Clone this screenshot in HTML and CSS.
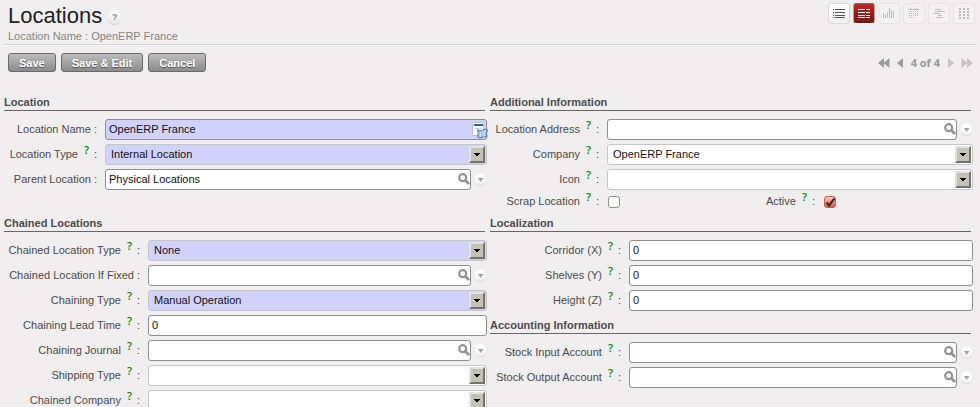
FILE: index.html
```html
<!DOCTYPE html>
<html lang="en">
<head>
<meta charset="utf-8">
<title>Locations</title>
<link rel="stylesheet" href="styles.css">
</head>
<body>
<svg class="sprite" aria-hidden="true">
  <defs>
    <linearGradient id="g-round" x1="0" y1="0" x2="0" y2="1"><stop offset="0" stop-color="#fff"/><stop offset="1" stop-color="#f0f0f0"/></linearGradient>
  </defs>
  <symbol id="search" viewBox="0 0 12 12">
    <circle cx="4.7" cy="4.700" r="3.500" fill="none" stroke="#949494" stroke-width="2.200"/>
    <path d="M7.600 7.600 10.300 10.300" stroke="#949494" stroke-width="2.800" stroke-linecap="round"/>
  </symbol>
  <symbol id="open" viewBox="0 0 13 13">
    <circle cx="6.500" cy="7" r="6" fill="#d6d6d6"/>
    <circle cx="6.500" cy="6.300" r="6" fill="url(#g-round)"/>
    <path d="M4 5h5.400L6.700 9z" fill="#a2a2a2"/>
  </symbol>
  <symbol id="drop" viewBox="0 0 16 17">
    <path d="M0 0h16v17H0z" fill="#c3c2b4"/>
    <path d="M0 17V0h16l-2 2H2v13z" fill="#e4e4df"/>
    <path d="M16 0v17H0l2-2h12V2z" fill="#74736a"/>
    <path d="M5 7h6v1h-1v1H9v1H7V9H6V8H5z" fill="#000"/>
  </symbol>
</svg>

<header class="header">
  <div>
    <h1 class="title">Locations <a class="title-help" href="#" aria-label="Help">?</a></h1>
    <p class="subtitle">Location Name : OpenERP France</p>
  </div>
  <nav class="views" aria-label="Views">
    <button class="view" aria-label="List"><svg viewBox="0 0 12 12"><path d="M0 1h1v1H0zM2 1h10v1H2zM0 4h1v1H0zM2 4h10v1H2zM0 7h1v1H0zM2 7h10v1H2zM0 9h1v1H0zM2 9h10v1H2z" fill="#555"/></svg></button>
    <button class="view view-active" aria-label="Form"><svg viewBox="0 0 12 12"><path d="M0 1h7v1H0zM8 1h4v1H8zM0 4h7v1H0zM8 4h4v1H8zM0 7h7v1H0zM8 7h4v1H8zM0 9h7v1H0zM8 9h4v1H8z" fill="#fff"/></svg></button>
    <button class="view view-off" aria-label="Graph" disabled><svg viewBox="0 0 12 12"><path d="M0 5h1v5H0zM2 6h1v4H2zM4 4h1v6H4zM6 0h1v10H6zM8 2h1v8H8zM10 3h1v7h-1z"/></svg></button>
    <button class="view view-off" aria-label="Calendar" disabled><svg viewBox="0 0 12 12"><path d="M0 1h11v1H0zM2 0h1v1H2zM8 0h1v1H8zM1 3h1v1H1zM3 3h1v1H3zM5 3h1v1H5zM7 3h1v1H7zM9 3h1v1H9zM1 5h1v1H1zM3 5h1v1H3zM5 5h1v1H5zM7 5h1v1H7zM9 5h1v1H9zM1 7h1v1H1zM3 7h1v1H3zM5 7h1v1H5zM7 7h1v1H7zM9 7h1v1H9zM1 9h1v1H1zM3 9h1v1H3zM5 9h1v1H5z"/></svg></button>
    <button class="view view-off" aria-label="Gantt" disabled><svg viewBox="0 0 12 12"><path d="M2 1h6v1H2zM2 3h10v1H2zM0 5h7v1H0zM5 7h4v1H5zM3 9h7v1H3z"/></svg></button>
    <button class="view view-off" aria-label="Kanban" disabled><svg viewBox="0 0 12 12"><path d="M1 0h2v2H1zM5 0h2v2H5zM9 0h2v2H9zM1 3h2v2H1zM5 3h2v2H5zM9 3h2v2H9zM1 6h2v2H1zM5 6h2v2H5zM9 6h2v2H9zM1 9h2v2H1zM5 9h2v2H5zM9 9h2v2H9z"/></svg></button>
  </nav>
</header>

<div class="toolbar">
  <div class="actions">
    <button class="action">Save</button>
    <button class="action">Save &amp; Edit</button>
    <button class="action">Cancel</button>
  </div>
  <div class="pager">
    <a href="#" aria-label="First"><svg width="12" height="10" viewBox="0 0 12 10"><path d="M6 0v10L0 5zM11.500 0v10L5.500 5z" fill="#999c9a"/></svg></a>
    <a href="#" aria-label="Previous"><svg width="7" height="10" viewBox="0 0 7 10"><path d="M6 0v10L0 5z" fill="#999c9a"/></svg></a>
    <span>4 of 4</span>
    <a href="#" aria-label="Next"><svg width="7" height="10" viewBox="0 0 7 10"><path d="M1 0v10l6-5z" fill="#c4c4c4"/></svg></a>
    <a href="#" aria-label="Last"><svg width="12" height="10" viewBox="0 0 12 10"><path d="M.5 0v10l6-5zM6 0v10l6-5z" fill="#c4c4c4"/></svg></a>
  </div>
</div>

<form class="sheet">
  <section class="group group-location">
    <h2>Location</h2>
    <div class="fields">
      <label for="name">Location Name :</label>
      <div class="box"><input id="name" class="text required" value="OpenERP France">
        <svg class="translate" viewBox="0 0 16 17"><rect x=".5" y=".5" width="11" height="13" rx="1" fill="#fafcff" stroke="#b4bfcb"/><path d="M2 3h9" stroke="#2c64a6" stroke-width="2"/><path d="M3 6.500h7" stroke="#ccd3dc"/><path d="M5.500 7.500c2 2 3 1.500 5 .5 1.500-.8 3-1 5-.3l-1 4 .6 3.300c-2-.6-3.600-.3-5 .4-1.600.8-3 .4-4.600-.6l.8-3.500z" fill="#a5caf0" stroke="#4675ae"/><path d="M8.500 10v5M12 9v5.500" stroke="#cfe4f9"/></svg></div>
      <label for="type">Location Type<sup>?</sup>:</label>
      <div class="box"><select id="type" class="required"><option>Internal Location</option></select><svg class="drop"><use href="#drop"/></svg></div>
      <label for="parent">Parent Location :</label>
      <div class="lookup"><div class="box"><input id="parent" class="text" value="Physical Locations"><svg class="search"><use href="#search"/></svg></div><svg class="open"><use href="#open"/></svg></div>
    </div>
  </section>

  <section class="group group-additional">
    <h2>Additional Information</h2>
    <div class="fields">
      <label for="address">Location Address<sup>?</sup>:</label>
      <div class="lookup"><div class="box"><input id="address" class="text"><svg class="search"><use href="#search"/></svg></div><svg class="open"><use href="#open"/></svg></div>
      <label for="company">Company<sup>?</sup>:</label>
      <div class="box"><select id="company"><option>OpenERP France</option></select><svg class="drop"><use href="#drop"/></svg></div>
      <label for="icon">Icon<sup>?</sup>:</label>
      <div class="box"><select id="icon"><option></option></select><svg class="drop"><use href="#drop"/></svg></div>
      <label for="scrap" class="short">Scrap Location<sup>?</sup>:</label>
      <div class="checks">
        <input type="checkbox" id="scrap">
        <label for="active" class="short">Active<sup>?</sup>:</label>
        <span class="tick"><input type="checkbox" id="active" checked><svg viewBox="0 0 12 12"><path d="M2.500 6.500 5 9.500 10.500 2.500" fill="none" stroke="#333" stroke-width="2.200"/></svg></span>
      </div>
    </div>
  </section>

  <section class="group group-wide">
    <h2>Chained Locations</h2>
    <div class="fields">
      <label for="ctype">Chained Location Type<sup>?</sup>:</label>
      <div class="box"><select id="ctype" class="required"><option>None</option></select><svg class="drop"><use href="#drop"/></svg></div>
      <label for="cfixed">Chained Location If Fixed :</label>
      <div class="lookup"><div class="box"><input id="cfixed" class="text"><svg class="search"><use href="#search"/></svg></div><svg class="open"><use href="#open"/></svg></div>
      <label for="chtype">Chaining Type<sup>?</sup>:</label>
      <div class="box"><select id="chtype" class="required"><option>Manual Operation</option></select><svg class="drop"><use href="#drop"/></svg></div>
      <label for="lead">Chaining Lead Time<sup>?</sup>:</label>
      <div class="box"><input id="lead" class="text" value="0"></div>
      <label for="journal">Chaining Journal<sup>?</sup>:</label>
      <div class="lookup"><div class="box"><input id="journal" class="text"><svg class="search"><use href="#search"/></svg></div><svg class="open"><use href="#open"/></svg></div>
      <label for="ship">Shipping Type<sup>?</sup>:</label>
      <div class="box"><select id="ship"><option></option></select><svg class="drop"><use href="#drop"/></svg></div>
      <label for="ccompany">Chained Company<sup>?</sup>:</label>
      <div class="box"><select id="ccompany"><option></option></select><svg class="drop"><use href="#drop"/></svg></div>
    </div>
  </section>

  <div class="stack">
    <section class="group group-stock">
      <h2>Localization</h2>
      <div class="fields">
        <label for="posx">Corridor (X)<sup>?</sup>:</label>
        <div class="box"><input id="posx" class="text" value="0"></div>
        <label for="posy">Shelves (Y)<sup>?</sup>:</label>
        <div class="box"><input id="posy" class="text" value="0"></div>
        <label for="posz">Height (Z)<sup>?</sup>:</label>
        <div class="box"><input id="posz" class="text" value="0"></div>
      </div>
    </section>
    <section class="group group-stock">
      <h2>Accounting Information</h2>
      <div class="fields">
        <label for="accin">Stock Input Account<sup>?</sup>:</label>
        <div class="lookup"><div class="box"><input id="accin" class="text"><svg class="search"><use href="#search"/></svg></div><svg class="open"><use href="#open"/></svg></div>
        <label for="accout">Stock Output Account<sup>?</sup>:</label>
        <div class="lookup"><div class="box"><input id="accout" class="text"><svg class="search"><use href="#search"/></svg></div><svg class="open"><use href="#open"/></svg></div>
      </div>
    </section>
  </div>
</form>
</body>
</html>
```
FILE: styles.css
```css
* { box-sizing: border-box; }

body {
  margin: 0;
  height: 100vh;
  overflow: hidden;
  background: #f0eeee;
  color: #4c4c4c;
  font: 11px/14px "Liberation Sans", Arial, sans-serif;
}

input, select, button { font: inherit; }
svg { display: block; }
.sprite { position: absolute; width: 0; height: 0; }

/* Header */
.header {
  display: flex;
  justify-content: space-between;
  margin: 0 5px 0 3px;
  padding: 3px 0 0 5px;
  border-bottom: 1px solid #d6d6d6;
  box-shadow: 0 1px 0 #fff;
}
.title {
  display: flex;
  align-items: center;
  gap: 6px;
  margin: 0;
  color: #222;
  font-size: 22px;
  font-weight: normal;
  line-height: 26px;
}
.title-help {
  width: 13px;
  height: 13px;
  margin-top: 3px;
  border-radius: 50%;
  background: linear-gradient(#fff, #e6e6e6);
  box-shadow: 0 1px 1px #d0d0d0;
  color: #888;
  font-size: 9px;
  font-weight: bold;
  line-height: 13px;
  text-align: center;
  text-decoration: none;
}
.subtitle { margin: 0; padding-bottom: 1px; color: #868686; }

.views { display: flex; gap: 3px; }
.view {
  display: flex;
  align-items: center;
  justify-content: center;
  width: 22px;
  height: 21px;
  padding: 0;
  border: 1px solid #d8d8d8;
  border-radius: 3px;
  background: linear-gradient(#fff, #f0f0f0);
}
.view svg { width: 12px; height: 12px; fill: #bdbdbd; shape-rendering: crispEdges; }
.view-active {
  border-color: #7d6b6b #b9a0a0 #fff;
  background: linear-gradient(#c0281c, #74150f);
}
.view-off { border-color: #e6e4e4; background: #f3f1f1; }

/* Toolbar */
.toolbar {
  display: flex;
  justify-content: space-between;
  align-items: center;
  padding: 8px 7px 23px 8px;
}
.actions { display: flex; gap: 5px; }
.action {
  height: 19px;
  padding: 0 10px;
  border: 1px solid #6a6a6a;
  border-radius: 3px;
  background: linear-gradient(#bcbcbc, #8c8c8c);
  color: #fff;
  font-weight: bold;
  line-height: 16px;
  text-shadow: 0 1px 1px #555;
}
.pager {
  display: flex;
  align-items: center;
  gap: 7px;
  color: #999;
  font-family: "Open Sans", sans-serif;
  font-weight: bold;
}

/* Form */
.sheet {
  display: grid;
  grid-template-columns: minmax(0, 1fr) minmax(0, 1fr);
  gap: 7px 3px;
  padding: 0 7px 0 4px;
}
.stack { display: grid; gap: 7px; align-content: start; }
.group h2 {
  margin: 0 2px 8px 0;
  padding-bottom: 1px;
  border-bottom: 1px solid #666;
  font-size: 11px;
  line-height: 14px;
}
.fields {
  display: grid;
  grid-template-columns: 93px minmax(0, 1fr);
  gap: 4px 8px;
}
.group-additional .fields { grid-template-columns: 109px minmax(0, 1fr); }
.group-wide .fields { grid-template-columns: 136px minmax(0, 1fr); }
.group-stock .fields { grid-template-columns: 131px minmax(0, 1fr); }

label { line-height: 21px; text-align: right; white-space: nowrap; }
.short { line-height: 15px; }
sup {
  margin: 0 5px 0 6px;
  color: #080;
  font: 600 11px/1px "Open Sans", sans-serif;
  vertical-align: 4px;
}

.box { position: relative; flex: 1; min-width: 0; }
.text, select {
  display: block;
  width: 100%;
  height: 21px;
  margin: 0;
  padding: 0 3px 1px;
  border: 1px solid #8f8f8f;
  border-radius: 3px;
  background: #fff;
  color: #111;
}
select { appearance: none; padding: 0 5px 1px; border-color: #c6c6c6; }
.required { background: #d2d2ff; }

.drop, .search, .translate { position: absolute; pointer-events: none; }
.drop { top: 2px; right: 2px; width: 16px; height: 17px; }
.search { top: 4px; right: 1px; width: 12px; height: 12px; }
.translate { top: 3px; right: -1px; width: 16px; height: 17px; }
.lookup { display: flex; align-items: center; gap: 3px; }
.open { width: 13px; height: 13px; }

.checks {
  display: grid;
  grid-template-columns: 14px 1fr 41%;
  align-items: center;
  column-gap: 8px;
}
.checks input {
  appearance: none;
  display: block;
  width: 12px;
  height: 12px;
  margin: 0 1px;
  border: 1px solid #8f8e80;
  border-radius: 3px;
  background: #fff;
}
.tick { position: relative; }
.tick input:checked { border-color: #cf5a48; background: linear-gradient(#ffc9c0, #ee523b); }
.tick svg { position: absolute; top: 0; left: 1px; width: 12px; height: 12px; pointer-events: none; }
```
